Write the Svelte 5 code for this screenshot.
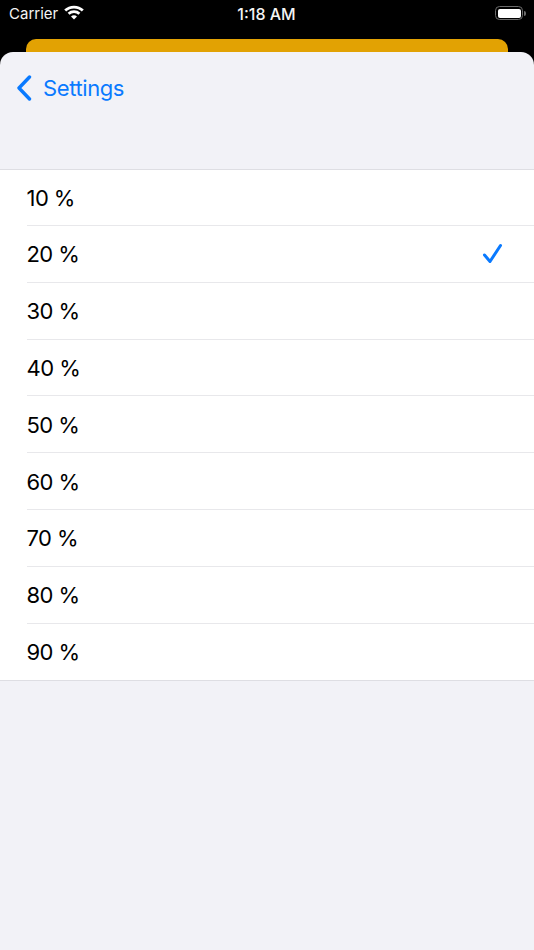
<script>
  const rows = [10, 20, 30, 40, 50, 60, 70, 80, 90];
  const selected = 20;
</script>

<div class="screen">
  <div class="status">
    <div class="left">
      <span class="carrier">Carrier</span>
      <svg class="wifi" width="20" height="15" viewBox="0 0 20 15">
        <path d="M1.2 5.6C6 1 14 1 18.8 5.6" class="arc" />
        <path d="M4.6 8.8C7.6 6 12.4 6 15.4 8.8" class="arc" />
        <path d="M10 14.6 L7 11.4 C8.8 10 11.2 10 13 11.4 Z" class="dot" />
      </svg>
    </div>
    <span class="time">1:18 AM</span>
    <div class="battery">
      <div class="cell"><div class="fill"></div></div>
      <div class="nub"></div>
    </div>
  </div>

  <div class="back-sheet"></div>

  <div class="sheet">
    <div class="nav">
      <svg class="chevron" width="16" height="26" viewBox="0 0 16 26">
        <path d="M13.5 2 L3 13 L13.5 24" />
      </svg>
      <span class="back-label">Settings</span>
    </div>
    <div class="list">
      {#each rows as r}
        <div class="row">
          <div class="row-inner">
            <span class="label">{r} %</span>
            {#if r === selected}
              <svg class="check" width="22" height="22" viewBox="0 0 22 22">
                <path d="M3.5 12 L9 18.5 L19.5 2.5" />
              </svg>
            {/if}
          </div>
        </div>
      {/each}
    </div>
  </div>
</div>

<style>
  :global(body) {
    margin: 0;
    background: #000;
  }
  .screen {
    width: 534px;
    height: 950px;
    background: #000;
    display: flex;
    flex-direction: column;
    overflow: hidden;
    font-family: Inter, "Liberation Sans", sans-serif;
  }
  .status {
    height: 39px;
    flex: none;
    display: grid;
    grid-template-columns: 1fr auto 1fr;
    align-items: start;
    color: #fff;
    padding: 0 8px 0 9px;
    box-sizing: border-box;
  }
  .left {
    display: flex;
    align-items: flex-start;
    gap: 6px;
    padding-top: 4px;
  }
  .carrier {
    font-size: 15px;
    line-height: 20px;
    color: #f4f4f4;
  }
  .wifi {
    margin-top: 1px;
  }
  .arc {
    fill: none;
    stroke: #fff;
    stroke-width: 2.8;
  }
  .dot {
    fill: #fff;
  }
  .time {
    font-size: 16px;
    font-weight: 500;
    line-height: 20px;
    padding-top: 4px;
    color: #f4f4f4;
    position: relative;
    left: -1px;
  }
  .battery {
    justify-self: end;
    display: flex;
    align-items: center;
    gap: 1px;
    padding-top: 6px;
  }
  .cell {
    width: 28px;
    height: 14px;
    box-sizing: border-box;
    border: 1.5px solid #6b6b6b;
    border-radius: 4.5px;
    padding: 1.5px;
  }
  .fill {
    width: 100%;
    height: 100%;
    background: #fff;
    border-radius: 2px;
  }
  .nub {
    width: 2px;
    height: 5px;
    background: #6b6b6b;
    border-radius: 0 2px 2px 0;
  }
  .back-sheet {
    height: 13px;
    flex: none;
    margin: 0 26px;
    background: #e2a203;
    border-radius: 10px 10px 0 0;
  }
  .sheet {
    flex: 1;
    background: #f2f2f7;
    border-radius: 13px 13px 0 0;
  }
  .nav {
    height: 117.3px;
    box-sizing: border-box;
    display: flex;
    align-items: flex-start;
    padding: 23px 0 0 16px;
    gap: 11px;
    color: #0a7aff;
  }
  .chevron {
    flex: none;
  }
  .chevron path {
    fill: none;
    stroke: #0a7aff;
    stroke-width: 3.4;
    stroke-linecap: round;
    stroke-linejoin: round;
  }
  .back-label {
    font-size: 22px;
    line-height: 26px;
    letter-spacing: -0.4px;
  }
  .list {
    background: #fff;
    border-top: 1px solid #dedee3;
    border-bottom: 1px solid #dedee3;
  }
  .row {
    padding-left: 27px;
  }
  .row-inner {
    height: 56.8px;
    box-sizing: border-box;
    display: flex;
    align-items: center;
    justify-content: space-between;
    padding-top: 1px;
    padding-right: 31px;
    border-bottom: 1px solid #e8e8eb;
  }
  .row:first-child .row-inner {
    height: 55.8px;
    padding-top: 0;
  }
  .row:last-child .row-inner {
    height: 56.4px;
    padding-top: 0;
    border-bottom: none;
  }
  .label {
    font-size: 22px;
    color: #000;
    line-height: 26px;
    letter-spacing: -0.55px;
    margin-left: -0.5px;
  }
  .check {
    display: block;
  }
  .check path {
    fill: none;
    stroke: #0a7aff;
    stroke-width: 3;
    stroke-linecap: round;
    stroke-linejoin: round;
  }
</style>
